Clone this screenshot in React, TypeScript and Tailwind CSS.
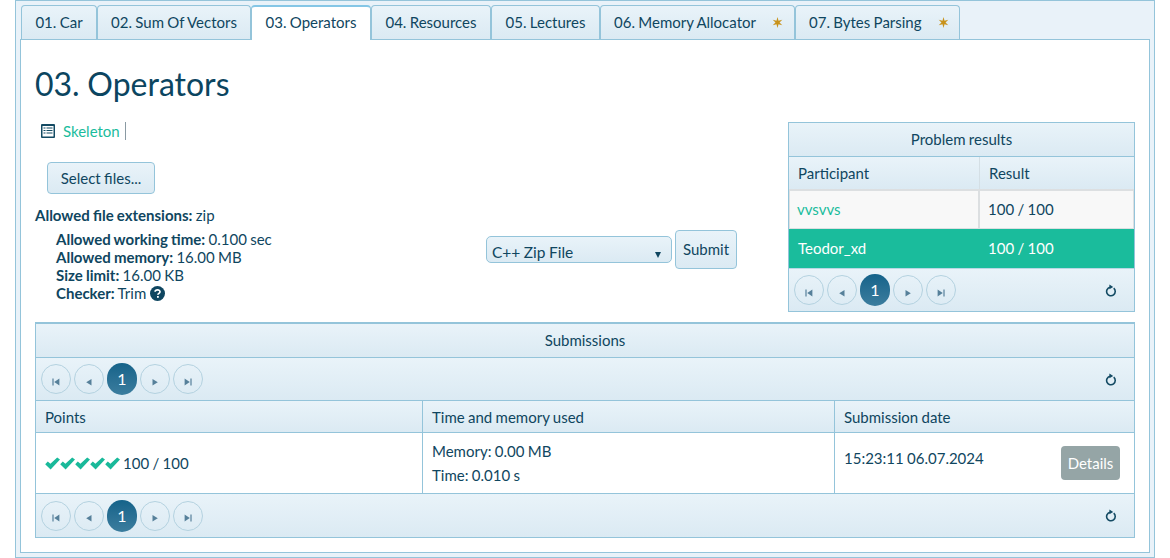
import React from "react";

const grad = "bg-gradient-to-b from-[#e9f3f9] to-[#dbeaf3]";
const line = "border-[#94c4da]";

function Star() {
  return (
    <svg width="11" height="11" viewBox="0 0 24 24" className="ml-[16px]">
      <path d="M12 0 L14.2 8.2 L22.4 6 L16.4 12 L22.4 18 L14.2 15.8 L12 24 L9.8 15.8 L1.6 18 L7.6 12 L1.6 6 L9.8 8.2 Z" fill="#c8921a" />
    </svg>
  );
}

function Tab({ label, active, star, w }: { label: string; active?: boolean; star?: boolean; w: string }) {
  return (
    <div
      className={
        active
          ? `flex items-center justify-center ${w} h-[35px] pb-[2px] -mb-px bg-white border border-b-0 ${line} border-t-2 border-t-[#84c6e6] rounded-t-[4px] text-[15px] z-10`
          : `flex items-center ${star ? "justify-start pl-[13px]" : "justify-center"} ${w} h-[34px] ${grad} border border-b-0 ${line} rounded-t-[4px] text-[15px]`
      }
    >
      <span>{label}</span>
      {star && <Star />}
    </div>
  );
}

function PageBtn({ children }: { children: React.ReactNode }) {
  return (
    <div className="flex items-center justify-center pt-[5px] w-[30px] h-[30px] rounded-full border border-[#b4d2e0] text-[#56809a]">
      {children}
    </div>
  );
}

function Pager() {
  return (
    <div className="flex items-center h-full pl-[5px] pr-[17px]">
      <div className="flex items-center gap-[3px]">
        <PageBtn>
          <svg width="8" height="8" viewBox="0 0 8 8" fill="currentColor"><rect x="0.4" y="0.5" width="1.2" height="7" /><path d="M7.4 0.6V7.4L2.2 4Z" /></svg>
        </PageBtn>
        <PageBtn>
          <svg width="8" height="8" viewBox="0 0 8 8" fill="currentColor"><path d="M6.5 1V7.4L1.2 4.2Z" /></svg>
        </PageBtn>
        <div className="flex items-center justify-center w-[30px] h-[32px] rounded-full bg-gradient-to-b from-[#14638a] to-[#3b7d9e] text-white text-[16px]">1</div>
        <PageBtn>
          <svg width="8" height="8" viewBox="0 0 8 8" fill="currentColor"><path d="M1.5 1V7.4L6.8 4.2Z" /></svg>
        </PageBtn>
        <PageBtn>
          <svg width="8" height="8" viewBox="0 0 8 8" fill="currentColor"><rect x="6.4" y="0.5" width="1.2" height="7" /><path d="M0.6 0.6V7.4L5.8 4Z" /></svg>
        </PageBtn>
      </div>
      <svg className="ml-auto" width="12" height="13" viewBox="0 0 12 13" fill="none">
        <path d="M5 3.3 A4.3 4.3 0 1 0 8.7 4.2" stroke="#134a63" strokeWidth="1.6" />
        <path d="M4.4 0.5 L8.2 3 L4.4 5.3 Z" fill="#134a63" />
      </svg>
    </div>
  );
}

function Check() {
  return (
    <svg width="15" height="13" viewBox="0 0 15 13">
      <path d="M0.2 7.2 L2.8 4.6 L5.4 6.8 L12.2 0.4 L15 2.6 L5.6 12.6 Z" fill="#19b99a" />
    </svg>
  );
}

export default function App() {
  return (
    <div className="w-[1170px] h-[558px] bg-white overflow-hidden text-[#0f4660] [word-spacing:-0.5px]" style={{ fontFamily: "Lato, sans-serif" }}>
      <div className={`ml-[15px] w-[1140px] h-[558px] border ${line} bg-[#e9f2f9] px-[4px] pt-[4px]`}>
        <div className="flex pl-px">
          <Tab label="01. Car" w="w-[76px]" />
          <Tab label="02. Sum Of Vectors" w="w-[154px]" />
          <Tab label="03. Operators" active w="w-[120px]" />
          <Tab label="04. Resources" w="w-[120px]" />
          <Tab label="05. Lectures" w="w-[109px]" />
          <Tab label="06. Memory Allocator" star w="w-[195px]" />
          <Tab label="07. Bytes Parsing" star w="w-[165px]" />
        </div>
        <div className={`w-[1130px] h-[514px] bg-white border ${line} pl-[14px] pr-[14px]`}>
          <div className="flex">
            <div className="w-[451px] shrink-0">
              <h1 className="text-[32px] leading-[40px] mt-[24px] text-[#0b4560]">03. Operators</h1>
              <div className="flex items-center mt-[18px] ml-[6px] h-[18px]">
                <svg width="14" height="14" viewBox="0 0 14 14">
                  <rect width="14" height="14" rx="1" fill="#134a63" />
                  <rect x="1.5" y="2" width="11" height="10.5" fill="#fff" />
                  <path d="M2.5 3.5h2v1h-2zM5.5 3.5h6v1h-6zM2.5 6h2v1h-2zM5.5 6h6v1h-6zM2.5 8.5h2v1h-2zM5.5 8.5h6v1h-6z" fill="#134a63" />
                </svg>
                <span className="ml-[8px] text-[15px] text-[#1abc9c]">Skeleton</span>
                <span className="ml-[5px] h-[18px] border-l border-[#8a9aa3]" />
              </div>
              <div className={`flex items-center justify-center ml-[12px] mt-[22px] w-[108px] h-[32px] rounded-[4px] border ${line} ${grad} text-[15px]`}>
                Select files...
              </div>
              <p className="mt-[12px] text-[15px] leading-[18px]">
                <b>Allowed file extensions:</b> zip
              </p>
              <div className="mt-[6px] ml-[21px] text-[15px] leading-[18px]">
                <p><b>Allowed working time:</b> 0.100 sec</p>
                <p><b>Allowed memory:</b> 16.00 MB</p>
                <p><b>Size limit:</b> 16.00 KB</p>
                <p className="flex items-center">
                  <span><b>Checker:</b> Trim</span>
                  <svg className="ml-[4px]" width="15" height="15" viewBox="0 0 15 15">
                    <circle cx="7.5" cy="7.5" r="7.5" fill="#0f4660" />
                    <path d="M5.1 5.8 C5.2 3.3 10 3.2 10 5.8 C10 7.4 7.9 7.3 7.9 8.8" stroke="#fff" strokeWidth="1.7" fill="none" />
                    <rect x="7" y="10" width="1.8" height="1.8" fill="#fff" />
                  </svg>
                </p>
              </div>
            </div>
            <div className="w-[302px] shrink-0 pt-[190px]">
              <div className="flex items-start">
                <div className={`relative mt-[6px] w-[186px] h-[27px] rounded-[5px] border ${line} ${grad} pl-[5px] text-[15.5px] leading-[31px]`}>
                  C++ Zip File
                  <span className="absolute right-[10px] top-[15px] w-0 h-0 border-x-[3.5px] border-x-transparent border-t-[6px] border-t-[#0f4660]" />
                </div>
                <div className={`flex items-center justify-center ml-[3px] w-[62px] h-[39px] rounded-[4px] border ${line} ${grad} text-[15px]`}>
                  Submit
                </div>
              </div>
            </div>
            <div className={`mt-[82px] w-[347px] h-[190px] shrink-0 border ${line} flex flex-col text-[15px]`}>
              <div className={`h-[34px] shrink-0 flex items-center justify-center ${grad} border-b ${line}`}>Problem results</div>
              <div className={`h-[32px] shrink-0 flex ${grad}`}>
                <div className="w-[191px] pl-[9px] flex items-center border-r border-[#d4dfe5]">Participant</div>
                <div className="pl-[9px] flex items-center">Result</div>
              </div>
              <div className="h-[40px] shrink-0 flex bg-[#f8f8f8] border border-t-2 border-[#dcdfe1]">
                <div className="w-[190px] pl-[7px] flex items-center border-r-2 border-[#dcdfe1] text-[#1abc9c]">vvsvvs</div>
                <div className="pl-[8px] flex items-center">100 / 100</div>
              </div>
              <div className="h-[39px] shrink-0 flex bg-[#1abc9c] text-white">
                <div className="w-[190px] pl-[9px] flex items-center">Teodor_xd</div>
                <div className="pl-[9px] flex items-center">100 / 100</div>
              </div>
              <div className={`flex-1 ${grad} border-t border-[#b9d7e4]`}>
                <Pager />
              </div>
            </div>
          </div>
          <div className={`mt-[10px] w-[1100px] h-[216px] border ${line} border-t-2 flex flex-col text-[15px]`}>
            <div className={`h-[34px] shrink-0 flex items-center justify-center ${grad} border-b ${line}`}>Submissions</div>
            <div className={`h-[43px] shrink-0 ${grad} border-b ${line}`}>
              <Pager />
            </div>
            <div className={`h-[32px] shrink-0 flex ${grad} border-b ${line}`}>
              <div className={`w-[387px] pl-[9px] pt-px flex items-center border-r ${line}`}>Points</div>
              <div className={`w-[412px] pl-[9px] pt-px flex items-center border-r ${line}`}>Time and memory used</div>
              <div className="pl-[9px] pt-px flex items-center">Submission date</div>
            </div>
            <div className={`h-[61px] shrink-0 flex border-b ${line}`}>
              <div className={`w-[387px] pl-[9px] flex items-center border-r ${line}`}>
                <Check /><Check /><Check /><Check /><Check />
                <span className="ml-[3px]">100 / 100</span>
              </div>
              <div className={`w-[412px] pl-[9px] flex flex-col justify-center gap-[6px] leading-[18px] border-r ${line}`}>
                <div>Memory: 0.00 MB</div>
                <div>Time: 0.010 s</div>
              </div>
              <div className="flex-1 pl-[9px] flex justify-between pr-[14px]">
                <span className="mt-[16px] leading-[18px]">15:23:11 06.07.2024</span>
                <span className="mt-[13px] flex items-center justify-center w-[59px] h-[34px] rounded-[4px] bg-[#95a5a6] text-white">Details</span>
              </div>
            </div>
            <div className={`flex-1 ${grad}`}>
              <Pager />
            </div>
          </div>
        </div>
      </div>
    </div>
  );
}
